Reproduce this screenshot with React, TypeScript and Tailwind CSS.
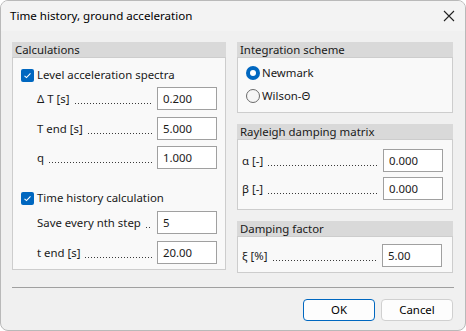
import React from 'react';

// dotted leader between a label and its input
const Dots = () => (
  <div className="flex-1 h-[1px] mt-[9px] mx-[5px] bg-[linear-gradient(to_right,#3a3a3a_1px,transparent_1px)] bg-[length:3px_1px] bg-repeat-x" />
);

const Field = ({ label, value, className = '' }: { label: string; value: string; className?: string }) => (
  <div className={`flex items-center h-[23px] ${className}`}>
    <span className="whitespace-nowrap">{label}</span>
    <Dots />
    <div className="w-[60px] h-[23px] shrink-0 border border-[#a0a0a0] bg-white flex items-center px-[5px]">
      {value}
    </div>
  </div>
);

const Check = ({ label }: { label: string }) => (
  <div className="flex items-center h-[18px]">
    <div className="w-[13px] h-[13px] rounded-[2px] bg-[#0067c0] flex items-center justify-center">
      <svg width="9" height="9" viewBox="0 0 9 9">
        <path d="M1.5 4.8 L3.5 6.6 L7.5 2.4" stroke="white" strokeWidth="1.1" fill="none" />
      </svg>
    </div>
    <span className="ml-[3px]">{label}</span>
  </div>
);

const Radio = ({ label, checked }: { label: string; checked?: boolean }) => (
  <div className="flex items-center h-[18px]">
    {checked ? (
      <div className="w-[14px] h-[14px] rounded-full bg-[#0067c0] flex items-center justify-center">
        <div className="w-[6px] h-[6px] rounded-full bg-white" />
      </div>
    ) : (
      <div className="w-[14px] h-[14px] rounded-full border border-[#6b6b6b] bg-[#f6f6f6]" />
    )}
    <span className="ml-[2px]">{label}</span>
  </div>
);

const Group = ({ title, children, className = '' }: { title: string; children: React.ReactNode; className?: string }) => (
  <div className={`flex flex-col ${className}`}>
    <div className="h-[15px] bg-[#d9d9d9] px-[3px] leading-[15px]">{title}</div>
    <div className="flex-1 border border-[#cdcdcd] bg-[#f9f9f9]">{children}</div>
  </div>
);

export default function App() {
  return (
    <div
      className="w-[466px] h-[331px] bg-[#f0f0f0] border border-[#b9b9b9] rounded-[8px] overflow-hidden flex flex-col text-[11.4px] text-[#1a1a1a]"
      style={{ fontFamily: '"Noto Sans", "Open Sans", sans-serif' }}
    >
      {/* Title bar */}
      <div className="h-[30px] bg-[#f3f3f3] flex items-center justify-between pl-[9px] pr-[9px] shrink-0">
        <span className="text-[11.6px] text-black">Time history, ground acceleration</span>
        <svg width="12" height="12" viewBox="0 0 12 12" className="mr-[1px]">
          <path d="M1 1 L11 11 M11 1 L1 11" stroke="#222" strokeWidth="1.1" />
        </svg>
      </div>

      {/* Content */}
      <div className="flex pl-[11px] pt-[11px] gap-[11px]">
        <Group title="Calculations" className="w-[214px] h-[228px]">
          <div className="pt-[8px] pl-[8px] pr-[8px]">
            <Check label="Level acceleration spectra" />
            <div className="pl-[16px]">
              <Field label="Δ T [s]" value="0.200" className="mt-[3px]" />
              <Field label="T end [s]" value="5.000" className="mt-[7px]" />
              <Field label="q" value="1.000" className="mt-[6px]" />
            </div>
            <div className="mt-[20px]">
              <Check label="Time history calculation" />
            </div>
            <div className="pl-[16px]">
              <Field label="Save every nth step" value="5" className="mt-[4px]" />
              <Field label="t end [s]" value="20.00" className="mt-[7px]" />
            </div>
          </div>
        </Group>

        <div className="w-[216px] flex flex-col">
          <Group title="Integration scheme" className="h-[71px]">
            <div className="pt-[6px] pl-[8px]">
              <Radio label="Newmark" checked />
              <div className="mt-[5px]">
                <Radio label="Wilson-Θ" />
              </div>
            </div>
          </Group>
          <Group title="Rayleigh damping matrix" className="h-[86px] mt-[11px]">
            <div className="pt-[9px] pl-[4px] pr-[9px]">
              <Field label="α [-]" value="0.000" />
              <Field label="β [-]" value="0.000" className="mt-[5px]" />
            </div>
          </Group>
          <Group title="Damping factor" className="h-[52px] mt-[11px]">
            <div className="pt-[7px] pl-[4px] pr-[10px]">
              <Field label="ξ [%]" value="5.00" />
            </div>
          </Group>
        </div>
      </div>

      {/* Separator */}
      <div className="mx-[11px] mt-[14px] h-[1px] bg-[#a0a0a0]" />

      {/* Buttons */}
      <div className="flex justify-end gap-[6px] pr-[12px] mt-[11px]">
        <button className="w-[72px] h-[22px] rounded-[4px] border border-[#0067c0] bg-[#fdfdfd] text-black">OK</button>
        <button className="w-[72px] h-[22px] rounded-[4px] border border-[#d0d0d0] bg-[#fdfdfd] text-black">Cancel</button>
      </div>
    </div>
  );
}
